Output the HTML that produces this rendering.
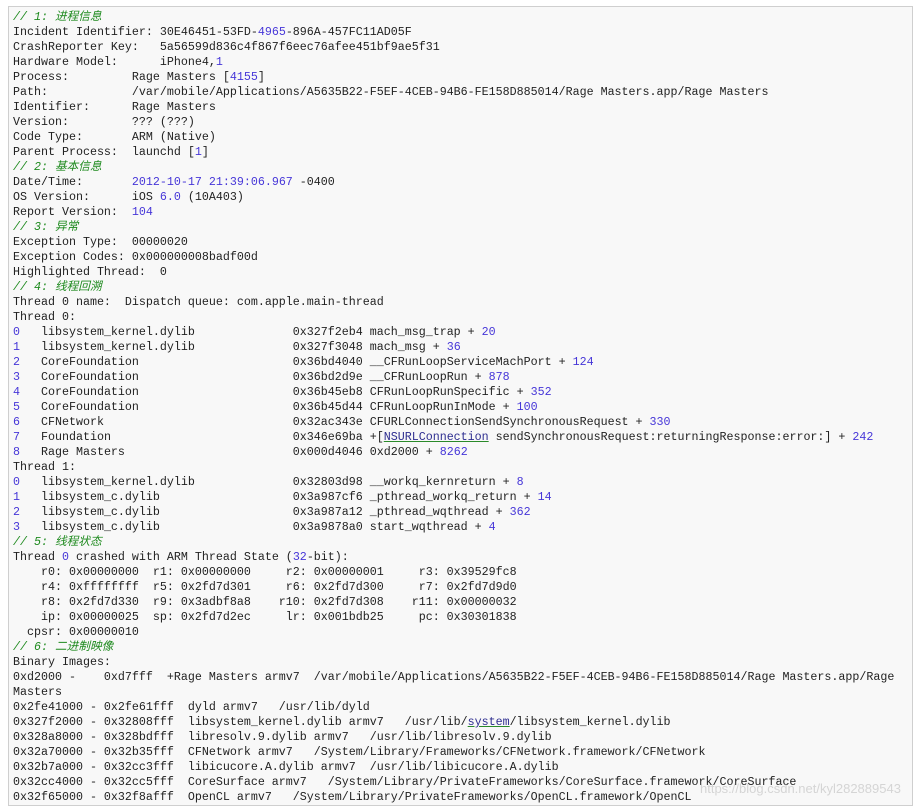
<!DOCTYPE html>
<html><head><meta charset="utf-8"><style>
html,body{margin:0;padding:0;background:#fff;width:923px;height:811px;overflow:hidden;}
#box{position:absolute;left:8px;top:6px;width:903px;height:798px;border:1px solid #cfcfcf;background:#f8f8f8;}
pre{margin:0;padding:3px 0 0 4px;font-family:"Liberation Mono","Noto Sans CJK SC",monospace;font-size:11.67px;line-height:15px;color:#222;white-space:pre;}
.n{color:#4636d8;}
.c{color:#1e8a1e;font-style:italic;}
.l{color:#2d2d8f;text-decoration:underline;text-decoration-color:#2a8a2a;}
#wm{position:absolute;left:700px;top:781px;font-family:"Liberation Sans",sans-serif;font-size:13px;color:rgba(190,190,190,0.6);}
</style></head><body>
<div id="box"><pre><span class="c">// 1: 进程信息</span>
Incident Identifier: 30E46451-53FD-<span class="n">4965</span>-896A-457FC11AD05F
CrashReporter Key:   5a56599d836c4f867f6eec76afee451bf9ae5f31
Hardware Model:      iPhone4,<span class="n">1</span>
Process:         Rage Masters [<span class="n">4155</span>]
Path:            /var/mobile/Applications/A5635B22-F5EF-4CEB-94B6-FE158D885014/Rage Masters.app/Rage Masters
Identifier:      Rage Masters
Version:         ??? (???)
Code Type:       ARM (Native)
Parent Process:  launchd [<span class="n">1</span>]
<span class="c">// 2: 基本信息</span>
Date/Time:       <span class="n">2012-10-17 21:39:06.967</span> -0400
OS Version:      iOS <span class="n">6.0</span> (10A403)
Report Version:  <span class="n">104</span>
<span class="c">// 3: 异常</span>
Exception Type:  00000020
Exception Codes: 0x000000008badf00d
Highlighted Thread:  0
<span class="c">// 4: 线程回溯</span>
Thread 0 name:  Dispatch queue: com.apple.main-thread
Thread 0:
<span class="n">0</span>   libsystem_kernel.dylib              0x327f2eb4 mach_msg_trap + <span class="n">20</span>
<span class="n">1</span>   libsystem_kernel.dylib              0x327f3048 mach_msg + <span class="n">36</span>
<span class="n">2</span>   CoreFoundation                      0x36bd4040 __CFRunLoopServiceMachPort + <span class="n">124</span>
<span class="n">3</span>   CoreFoundation                      0x36bd2d9e __CFRunLoopRun + <span class="n">878</span>
<span class="n">4</span>   CoreFoundation                      0x36b45eb8 CFRunLoopRunSpecific + <span class="n">352</span>
<span class="n">5</span>   CoreFoundation                      0x36b45d44 CFRunLoopRunInMode + <span class="n">100</span>
<span class="n">6</span>   CFNetwork                           0x32ac343e CFURLConnectionSendSynchronousRequest + <span class="n">330</span>
<span class="n">7</span>   Foundation                          0x346e69ba +[<span class="l">NSURLConnection</span> sendSynchronousRequest:returningResponse:error:] + <span class="n">242</span>
<span class="n">8</span>   Rage Masters                        0x000d4046 0xd2000 + <span class="n">8262</span>
Thread 1:
<span class="n">0</span>   libsystem_kernel.dylib              0x32803d98 __workq_kernreturn + <span class="n">8</span>
<span class="n">1</span>   libsystem_c.dylib                   0x3a987cf6 _pthread_workq_return + <span class="n">14</span>
<span class="n">2</span>   libsystem_c.dylib                   0x3a987a12 _pthread_wqthread + <span class="n">362</span>
<span class="n">3</span>   libsystem_c.dylib                   0x3a9878a0 start_wqthread + <span class="n">4</span>
<span class="c">// 5: 线程状态</span>
Thread <span class="n">0</span> crashed with ARM Thread State (<span class="n">32</span>-bit):
    r0: 0x00000000  r1: 0x00000000     r2: 0x00000001     r3: 0x39529fc8
    r4: 0xffffffff  r5: 0x2fd7d301     r6: 0x2fd7d300     r7: 0x2fd7d9d0
    r8: 0x2fd7d330  r9: 0x3adbf8a8    r10: 0x2fd7d308    r11: 0x00000032
    ip: 0x00000025  sp: 0x2fd7d2ec     lr: 0x001bdb25     pc: 0x30301838
  cpsr: 0x00000010
<span class="c">// 6: 二进制映像</span>
Binary Images:
0xd2000 -    0xd7fff  +Rage Masters armv7  /var/mobile/Applications/A5635B22-F5EF-4CEB-94B6-FE158D885014/Rage Masters.app/Rage
Masters
0x2fe41000 - 0x2fe61fff  dyld armv7   /usr/lib/dyld
0x327f2000 - 0x32808fff  libsystem_kernel.dylib armv7   /usr/lib/<span class="l">system</span>/libsystem_kernel.dylib
0x328a8000 - 0x328bdfff  libresolv.9.dylib armv7   /usr/lib/libresolv.9.dylib
0x32a70000 - 0x32b35fff  CFNetwork armv7   /System/Library/Frameworks/CFNetwork.framework/CFNetwork
0x32b7a000 - 0x32cc3fff  libicucore.A.dylib armv7  /usr/lib/libicucore.A.dylib
0x32cc4000 - 0x32cc5fff  CoreSurface armv7   /System/Library/PrivateFrameworks/CoreSurface.framework/CoreSurface
0x32f65000 - 0x32f8afff  OpenCL armv7   /System/Library/PrivateFrameworks/OpenCL.framework/OpenCL</pre></div>
<div id="wm">https://blog.csdn.net/kyl282889543</div>
</body></html>
